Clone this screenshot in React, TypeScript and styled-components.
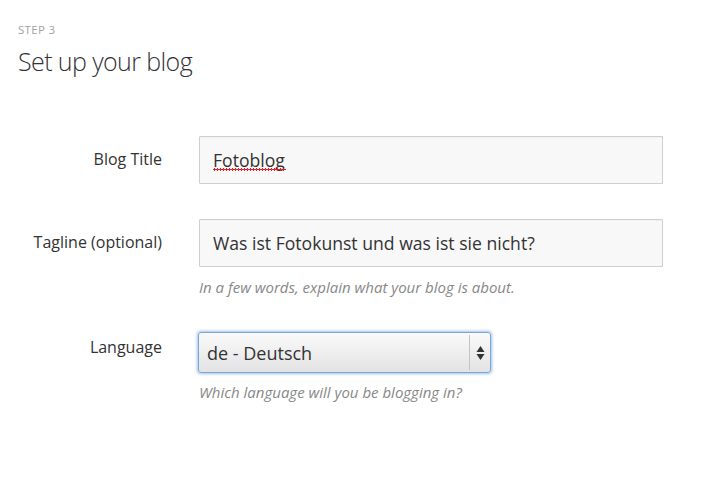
import React from "react";
import styled, { createGlobalStyle } from "styled-components";

const Global = createGlobalStyle`
  html, body { margin: 0; padding: 0; background: #fff; }
  body { font-family: "Open Sans", "Noto Sans", sans-serif; color: #333; }
  * { box-sizing: border-box; }
`;

const Page = styled.div`
  padding: 22px 18px 40px 18px;
  width: 707px;
`;

const Step = styled.div`
  font-size: 11.5px;
  line-height: 16px;
  letter-spacing: 0.3px;
  color: #a3a3a3;
  text-transform: uppercase;
`;

const Title = styled.h1`
  margin: 6px 0 0 0;
  font-size: 25px;
  line-height: 34px;
  font-weight: 300;
  color: #333;
  letter-spacing: -0.6px;
`;

const Form = styled.div`
  margin-top: 58px;
  display: grid;
  grid-template-columns: 144px 1fr;
  column-gap: 37px;
  row-gap: 35px;
`;

const Label = styled.label<{ $top: number }>`
  text-align: right;
  font-size: 16px;
  line-height: 20px;
  color: #333;
  padding-top: ${(p) => p.$top}px;
`;

const Field = styled.div`
  display: flex;
  flex-direction: column;
`;

const InputWrap = styled.div`
  position: relative;
  width: 464px;
`;

const TextInput = styled.input`
  width: 464px;
  height: 48px;
  border: 1px solid #cfcfcf;
  background: #f8f8f8;
  padding: 0 13px;
  font-family: "Open Sans", "Noto Sans", sans-serif;
  font-size: 17.6px;
  color: #333;
  outline: none;
  border-radius: 1px;
  box-shadow: inset 0 1px 1px rgba(0, 0, 0, 0.03);
`;

const SpellMark = styled.span<{ $width: number }>`
  position: absolute;
  left: 14px;
  top: 32px;
  height: 3px;
  width: ${(p) => p.$width}px;
  background-image: radial-gradient(circle, #e0202c 1px, transparent 1.3px);
  background-size: 3px 3px;
  pointer-events: none;
`;

const Hint = styled.div`
  margin-top: 11px;
  font-size: 15px;
  line-height: 19px;
  font-style: italic;
  color: #888;
`;

const SelectWrap = styled.div`
  position: relative;
  width: 293px;
  height: 41px;
  margin-left: -1px;
  margin-bottom: -1px;
`;

const Select = styled.select`
  appearance: none;
  -webkit-appearance: none;
  width: 100%;
  height: 100%;
  border: 1px solid #7aa6d8;
  border-radius: 3px;
  box-shadow: 0 0 3px 1px rgba(100, 150, 220, 0.6);
  background: linear-gradient(#fafafa, #e3e3e3);
  font-family: "Open Sans", "Noto Sans", sans-serif;
  font-size: 18px;
  color: #333;
  padding: 0 0 0 8px;
  outline: none;
`;

const Arrows = styled.span`
  position: absolute;
  top: 3px;
  bottom: 3px;
  right: 1px;
  width: 21px;
  border-left: 1px solid #c4c4c4;
  display: flex;
  align-items: center;
  justify-content: center;
  pointer-events: none;
`;

export default function App() {
  return (
    <>
      <Global />
      <Page>
        <Step>Step 3</Step>
        <Title>Set up your blog</Title>
        <Form>
          <Label $top={13}>Blog Title</Label>
          <Field>
            <InputWrap>
              <TextInput defaultValue="Fotoblog" spellCheck={false} />
              <SpellMark $width={73} />
            </InputWrap>
          </Field>

          <Label $top={13}>Tagline (optional)</Label>
          <Field>
            <TextInput defaultValue="Was ist Fotokunst und was ist sie nicht?" spellCheck={false} />
            <Hint>In a few words, explain what your blog is about.</Hint>
          </Field>

          <Label $top={5}>Language</Label>
          <Field>
            <SelectWrap>
              <Select defaultValue="de">
                <option value="de">de - Deutsch</option>
                <option value="en">en - English</option>
              </Select>
              <Arrows>
                <svg width="9" height="16" viewBox="0 0 9 16">
                  <path d="M4.5 1 L8.5 7 L0.5 7 Z" fill="#333" />
                  <path d="M4.5 15 L8.5 9 L0.5 9 Z" fill="#333" />
                </svg>
              </Arrows>
            </SelectWrap>
            <Hint>Which language will you be blogging in?</Hint>
          </Field>
        </Form>
      </Page>
    </>
  );
}
